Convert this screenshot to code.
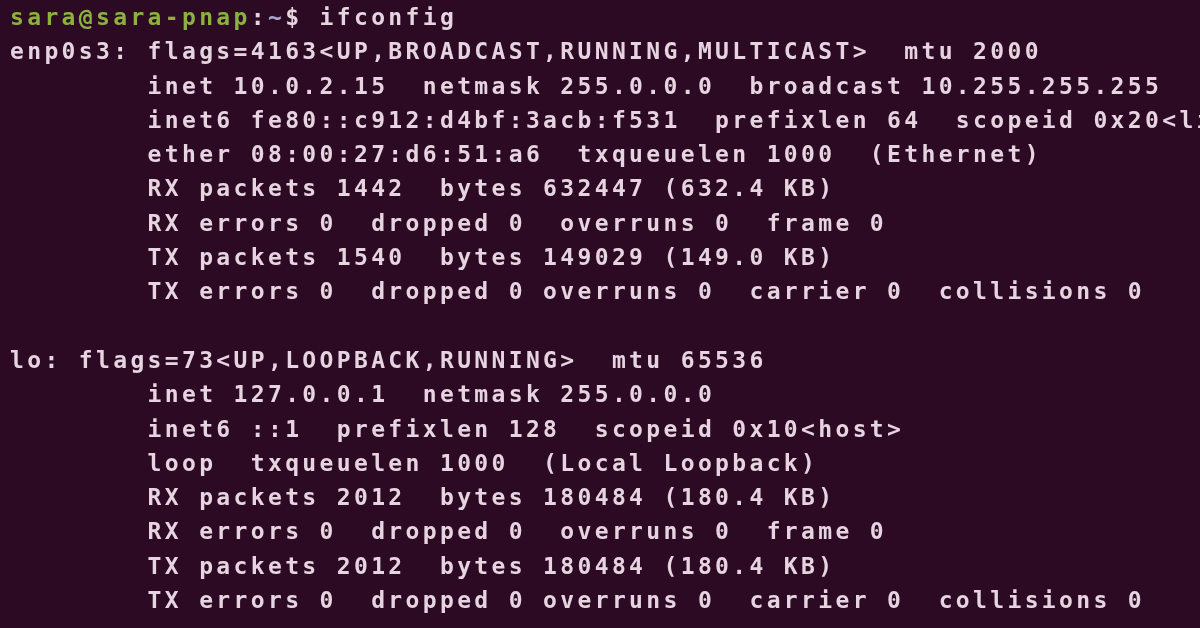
const LINES = [
  'enp0s3: flags=4163<UP,BROADCAST,RUNNING,MULTICAST>  mtu 2000',
  '        inet 10.0.2.15  netmask 255.0.0.0  broadcast 10.255.255.255',
  '        inet6 fe80::c912:d4bf:3acb:f531  prefixlen 64  scopeid 0x20<link>',
  '        ether 08:00:27:d6:51:a6  txqueuelen 1000  (Ethernet)',
  '        RX packets 1442  bytes 632447 (632.4 KB)',
  '        RX errors 0  dropped 0  overruns 0  frame 0',
  '        TX packets 1540  bytes 149029 (149.0 KB)',
  '        TX errors 0  dropped 0 overruns 0  carrier 0  collisions 0',
  '',
  'lo: flags=73<UP,LOOPBACK,RUNNING>  mtu 65536',
  '        inet 127.0.0.1  netmask 255.0.0.0',
  '        inet6 ::1  prefixlen 128  scopeid 0x10<host>',
  '        loop  txqueuelen 1000  (Local Loopback)',
  '        RX packets 2012  bytes 180484 (180.4 KB)',
  '        RX errors 0  dropped 0  overruns 0  frame 0',
  '        TX packets 2012  bytes 180484 (180.4 KB)',
  '        TX errors 0  dropped 0 overruns 0  carrier 0  collisions 0',
];

export default function App() {
  return (
    <div className="h-[628px] w-[1200px] overflow-hidden bg-[#2d0a23] pl-[10px] font-['DejaVu_Sans_Mono',monospace] text-[23px] font-bold leading-[34.3px] tracking-[3.35px] text-[#e6d4e0] [filter:blur(0.5px)]">
      <div className="whitespace-pre">
        <span className="text-[#8ab23c]">sara@sara-pnap</span>
        <span>:</span>
        <span className="text-[#a9a6d0]">~</span>
        <span>$ ifconfig</span>
      </div>
      {LINES.map((line, i) => (
        <div key={i} className="h-[34.3px] whitespace-pre">
          {line}
        </div>
      ))}
    </div>
  );
}
